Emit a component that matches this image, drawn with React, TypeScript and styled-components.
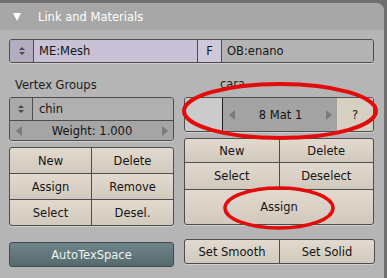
import styled, { createGlobalStyle } from 'styled-components';

const GlobalStyle = createGlobalStyle`
  html, body {
    margin: 0;
    padding: 0;
    background: #6f6f6f;
  }
  body {
    font-family: "DejaVu Sans", "Liberation Sans", sans-serif;
    font-size: 11px;
  }
`;

const Window = styled.div`
  position: relative;
  width: 387px;
  height: 278px;
  padding-top: 3px;
  box-sizing: border-box;
  background: #6f6f6f;
  overflow: hidden;
`;

const Panel = styled.div`
  width: 384px;
  height: 275px;
  background: #b5b5b5;
  border-top-right-radius: 8px;
  display: flex;
  flex-direction: column;
`;

const Header = styled.div`
  height: 27px;
  flex: none;
  background: #a7a7a7;
  border-top-right-radius: 8px;
  display: flex;
  align-items: center;
  padding-left: 13px;
  gap: 17px;
  color: #ffffff;
  font-size: 11.5px;
`;

const Triangle = styled.span`
  width: 0;
  height: 0;
  border-left: 4.5px solid transparent;
  border-right: 4.5px solid transparent;
  border-top: 8px solid #ffffff;
  margin-top: 1px;
`;

const Body = styled.div`
  padding: 9px 10px 0 9px;
  display: flex;
  flex-direction: column;
`;

const Bar = styled.div`
  display: flex;
  height: 24px;
  border: 1px solid #4d4d4d;
  border-radius: 3px;
  overflow: hidden;
  box-sizing: border-box;
  box-shadow: 0 1px 0 rgba(255, 255, 255, 0.35);
`;

const Cell = styled.div<{ $w?: number; $bg: string; $center?: boolean }>`
  ${(p) => (p.$w ? `width: ${p.$w}px; flex: none;` : 'flex: 1;')}
  background: ${(p) => p.$bg};
  display: flex;
  align-items: center;
  justify-content: ${(p) => (p.$center ? 'center' : 'flex-start')};
  padding-left: ${(p) => (p.$center ? 0 : 5)}px;
  box-sizing: border-box;
  color: #141414;
  font-size: 11.5px;
  & + & {
    border-left: 1px solid #4d4d4d;
  }
`;

const Columns = styled.div`
  display: flex;
  gap: 10px;
`;

const LeftCol = styled.div`
  width: 165px;
  display: flex;
  flex-direction: column;
`;

const RightCol = styled.div`
  width: 190px;
  display: flex;
  flex-direction: column;
`;

const Label = styled.div<{ $indent: number; $drop: number }>`
  height: 34px;
  box-sizing: border-box;
  display: flex;
  align-items: flex-end;
  padding-left: ${(p) => p.$indent}px;
  padding-bottom: ${(p) => p.$drop}px;
  color: #1c1c1c;
  font-size: 11.5px;
`;

const Stack = styled.div`
  border: 1px solid #4d4d4d;
  border-radius: 3px;
  overflow: hidden;
  box-shadow: 0 1px 0 rgba(255, 255, 255, 0.35);
`;

const Row = styled.div<{ $h: number; $bg?: string }>`
  height: ${(p) => p.$h}px;
  display: flex;
  background: ${(p) => p.$bg || 'transparent'};
  & + & {
    border-top: 1px solid #4d4d4d;
  }
`;

const Spinner = styled.div<{ $bg: string }>`
  width: 22px;
  flex: none;
  background: ${(p) => p.$bg};
  border-right: 1px solid #4d4d4d;
  display: flex;
  align-items: center;
  justify-content: center;
`;

const Slider = styled.div<{ $bg: string }>`
  flex: 1;
  display: flex;
  align-items: center;
  justify-content: space-between;
  padding: 0 5px 0 6px;
  background: ${(p) => p.$bg};
  color: #141414;
  font-size: 11.5px;
`;

const Swatch = styled.div`
  width: 37px;
  flex: none;
  background: #cbcbcb;
  border-right: 1px solid #202020;
`;

const ButtonGrid = styled.div<{ $rows: string }>`
  display: grid;
  grid-template-columns: 1fr 1fr;
  grid-template-rows: ${(p) => p.$rows};
  border: 1px solid #4d4d4d;
  border-radius: 3px;
  overflow: hidden;
  background: #4d4d4d;
  gap: 1px;
  box-shadow: 0 1px 0 rgba(255, 255, 255, 0.35);
`;

const Button = styled.div<{ $wide?: boolean }>`
  ${(p) => (p.$wide ? 'grid-column: 1 / span 2;' : '')}
  background: linear-gradient(#e2dacf, #d2c9bd);
  display: flex;
  align-items: center;
  justify-content: center;
  color: #141414;
  font-size: 11.5px;
`;

const Toggle = styled.div`
  height: 25px;
  box-sizing: border-box;
  border: 1px solid #3e4c4f;
  border-radius: 3px;
  background: linear-gradient(#6f8589, #566a6e);
  color: #eef4f4;
  display: flex;
  align-items: center;
  justify-content: center;
  font-size: 11.5px;
`;

const Markup = styled.svg`
  position: absolute;
  left: 0;
  top: 0;
  pointer-events: none;
`;

const SpinIcon = () => (
  <svg width="10" height="12" viewBox="0 0 10 12">
    <path d="M2 5 L5 2 L8 5 Z M2 7 L5 10 L8 7 Z" fill="#4a4a4a" />
  </svg>
);

const Arrow = ({ dir }: { dir: 'l' | 'r' }) => (
  <svg width="6" height="10" viewBox="0 0 6 10">
    <path d={dir === 'l' ? 'M6 0 L0 5 L6 10 Z' : 'M0 0 L6 5 L0 10 Z'} fill="#7c7c7c" />
  </svg>
);

const App = () => {
  return (
    <Window>
      <GlobalStyle />
      <Panel>
        <Header>
          <Triangle />
          Link and Materials
        </Header>
        <Body>
          <Bar>
            <Cell $w={23} $bg="#b4acc0" $center>
              <SpinIcon />
            </Cell>
            <Cell $w={164} $bg="#c9c1d5">ME:Mesh</Cell>
            <Cell $w={24} $bg="#cfc8da" $center>F</Cell>
            <Cell $bg="#b3b3b3">OB:enano</Cell>
          </Bar>
          <Columns>
            <LeftCol>
              <Label $indent={6} $drop={5}>Vertex Groups</Label>
              <Stack>
                <Row $h={22}>
                  <Spinner $bg="#a9a9a9">
                    <SpinIcon />
                  </Spinner>
                  <Slider $bg="#b0b0b0">chin</Slider>
                </Row>
                <Row $h={19}>
                  <Slider $bg="#a5a5a5">
                    <Arrow dir="l" />
                    Weight: 1.000
                    <Arrow dir="r" />
                  </Slider>
                </Row>
              </Stack>
              <ButtonGrid $rows="25px 25px 25px" style={{ marginTop: 6 }}>
                <Button>New</Button>
                <Button>Delete</Button>
                <Button>Assign</Button>
                <Button>Remove</Button>
                <Button>Select</Button>
                <Button>Desel.</Button>
              </ButtonGrid>
              <Toggle style={{ marginTop: 16 }}>AutoTexSpace</Toggle>
            </LeftCol>
            <RightCol>
              <Label $indent={36} $drop={6}>cara</Label>
              <Stack>
                <Row $h={33}>
                  <Swatch />
                  <Slider $bg="#a3a3a3">
                    <Arrow dir="l" />
                    8 Mat 1
                    <Arrow dir="r" />
                  </Slider>
                  <Cell $w={36} $bg="#d8cfc3" $center>?</Cell>
                </Row>
              </Stack>
              <ButtonGrid $rows="23px 26px 34px" style={{ marginTop: 6 }}>
                <Button>New</Button>
                <Button>Delete</Button>
                <Button>Select</Button>
                <Button>Deselect</Button>
                <Button $wide>Assign</Button>
              </ButtonGrid>
              <ButtonGrid $rows="23px" style={{ marginTop: 14, width: 189 }}>
                <Button>Set Smooth</Button>
                <Button>Set Solid</Button>
              </ButtonGrid>
            </RightCol>
          </Columns>
        </Body>
      </Panel>
      <Markup width="387" height="278" viewBox="0 0 387 278">
        <ellipse cx="280" cy="111" rx="96" ry="27" fill="none" stroke="#e30c0c" strokeWidth="4" />
        <ellipse cx="279" cy="208" rx="54" ry="20" fill="none" stroke="#e30c0c" strokeWidth="3.5" />
      </Markup>
    </Window>
  );
};

export default App;
